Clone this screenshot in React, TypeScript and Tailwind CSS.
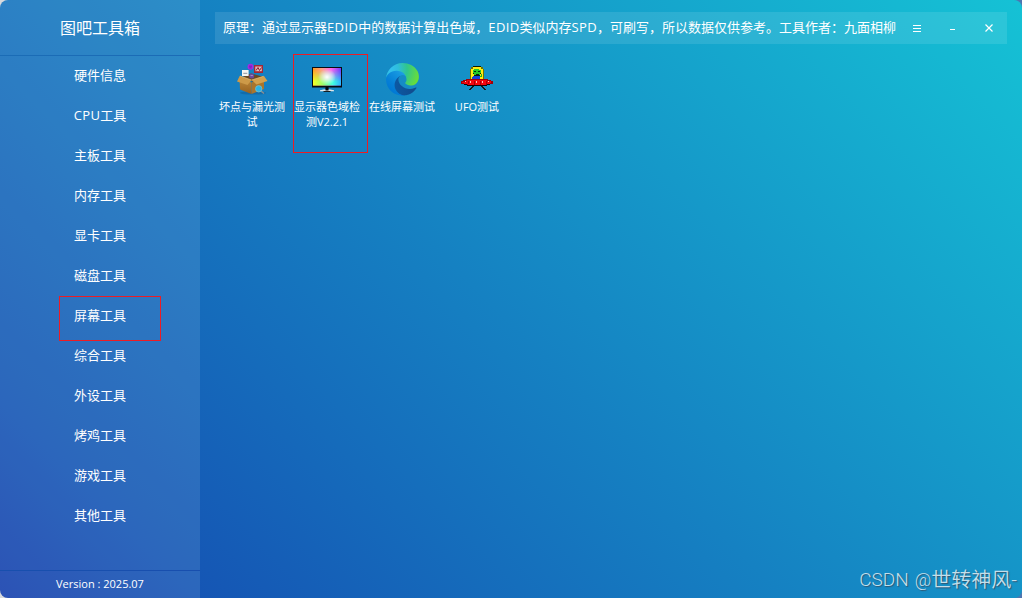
import type { ReactNode } from "react";

const categories = [
  "硬件信息", "CPU工具", "主板工具", "内存工具", "显卡工具", "磁盘工具",
  "屏幕工具", "综合工具", "外设工具", "烤鸡工具", "游戏工具", "其他工具",
];

function BoxIcon() {
  return (
    <svg width="32" height="32" viewBox="0 0 32 32">
      <defs>
        <linearGradient id="boxFront" x1="0" y1="0" x2="0" y2="1">
          <stop offset="0" stopColor="#c08a3a" />
          <stop offset="1" stopColor="#96611f" />
        </linearGradient>
      </defs>
      <ellipse cx="17" cy="30" rx="13" ry="1.6" fill="#0d4b80" opacity=".35" />
      <path d="M4 15L15 10.5L28 14L18 19Z" fill="#6b4a20" />
      <circle cx="14.5" cy="3.8" r="3" fill="#a12be0" />
      <path d="M13 3.2h3M13.4 4.8h2.2" stroke="#6a1aa8" strokeWidth=".8" />
      <rect x="18" y="2" width="9" height="8" fill="#a52735" />
      <rect x="19.3" y="3.5" width="6.5" height="4.7" fill="#dfbcbc" />
      <path d="M20 7.5l2-3 1.5 3 2-3" stroke="#8f1d2a" fill="none" />
      <rect x="6" y="7" width="6.6" height="6" fill="#f6f6f2" />
      <path d="M7.3 10.3h4" stroke="#8d959e" />
      <circle cx="15.7" cy="13" r="2.5" fill="#6a4a9a" />
      <path d="M14.5 12.6h2.4" stroke="#b9a2d4" strokeWidth=".8" />
      <path d="M3.5 15.5L15.5 19.5V31L4 26.5Z" fill="url(#boxFront)" />
      <path d="M15.5 19.5L28 15V26L15.5 31Z" fill="#a9752c" />
      <path d="M3.8 12.8L1 18.5L11.5 22L15.5 17Z" fill="#cd9a48" />
      <path d="M28 13L31.5 18L20.5 21.5L15.5 17Z" fill="#d3a14e" />
      <path d="M4 13L15.5 17L27.5 13.3" fill="none" stroke="#e8c88a" strokeWidth=".6" />
      <path d="M25 28l3 2.5" stroke="#8a8e91" strokeWidth="1.6" />
      <circle cx="22.7" cy="25.8" r="3.2" fill="#2bb4e4" stroke="#7ac4d4" strokeWidth=".7" />
    </svg>
  );
}

function MonitorIcon() {
  return (
    <svg width="32" height="32" viewBox="0 0 32 32">
      <defs>
        <linearGradient id="hue" x1="0" y1="0" x2="1" y2="0">
          <stop offset="0" stopColor="#ff9d1e" />
          <stop offset=".33" stopColor="#ff9f8a" />
          <stop offset=".65" stopColor="#ff68f0" />
          <stop offset="1" stopColor="#6e3cff" />
        </linearGradient>
        <linearGradient id="hueLow" x1="0" y1="0" x2="1" y2="0">
          <stop offset="0" stopColor="#f6ff20" />
          <stop offset=".4" stopColor="#8cff76" />
          <stop offset=".7" stopColor="#43ffe0" />
          <stop offset="1" stopColor="#2cb1ff" />
        </linearGradient>
        <linearGradient id="fade" x1="0" y1="0" x2="0" y2="1">
          <stop offset=".1" stopColor="#000" />
          <stop offset=".75" stopColor="#fff" />
        </linearGradient>
        <mask id="lowMask"><rect x="2" y="5" width="28" height="18" fill="url(#fade)" /></mask>
        <radialGradient id="glow">
          <stop offset="0" stopColor="#fff" />
          <stop offset="1" stopColor="#fff" stopOpacity="0" />
        </radialGradient>
      </defs>
      <rect x="1" y="4" width="30" height="20.5" fill="#080b10" />
      <rect x="2" y="5" width="28" height="17.5" fill="url(#hue)" />
      <rect x="2" y="5" width="28" height="17.5" fill="url(#hueLow)" mask="url(#lowMask)" />
      <ellipse cx="16" cy="14" rx="9" ry="8" fill="url(#glow)" />
      <rect x="14.5" y="24" width="3" height="3" fill="#05080c" />
      <path d="M9 27.3q7-2 14 0v1H9z" fill="#e1e7ea" />
      <path d="M12.5 28h7v.9h-7z" fill="#111" />
      <rect x="14.5" y="25.5" width="3" height="2" fill="#05080c" />
    </svg>
  );
}

function EdgeIcon() {
  return (
    <svg width="33" height="33" viewBox="0 0 256 256">
      <defs>
        <linearGradient id="edgeDeep" x1="63" y1="177" x2="241" y2="177" gradientUnits="userSpaceOnUse">
          <stop offset="0" stopColor="#0c59a4" />
          <stop offset="1" stopColor="#114a8b" />
        </linearGradient>
        <linearGradient id="edgeMid" x1="155" y1="105" x2="46" y2="224" gradientUnits="userSpaceOnUse">
          <stop offset="0" stopColor="#1b9de2" />
          <stop offset=".16" stopColor="#1595df" />
          <stop offset=".67" stopColor="#0680d7" />
          <stop offset="1" stopColor="#0078d4" />
        </linearGradient>
        <radialGradient id="edgeTop" cx="26" cy="47" r="230" gradientUnits="userSpaceOnUse">
          <stop offset="0" stopColor="#35c1f1" />
          <stop offset=".3" stopColor="#2ebddc" />
          <stop offset=".6" stopColor="#30c68c" />
          <stop offset="1" stopColor="#68dd3a" />
        </radialGradient>
      </defs>
      <path fill="url(#edgeDeep)" d="M231 190a94 94 0 0 1-10 4 102 102 0 0 1-36 7c-47 0-89-33-89-75 0-11 7-22 17-28-43 2-54 47-54 73 0 74 68 81 83 81 8 0 20-2 27-5l2 0a128 128 0 0 0 66-53 4 4 0 0 0-6-4z" />
      <path fill="url(#edgeMid)" d="M106 241a79 79 0 0 1-23-21 81 81 0 0 1 30-122c3-1 8-4 15-4a32 32 0 0 1 32 31c0 1 25-79-78-79C38 46 0 88 0 124a130 130 0 0 0 12 56 128 128 0 0 0 156 67 76 76 0 0 1-62-6z" />
      <path fill="url(#edgeTop)" d="M152 149c-1 1-3 2-3 6 0 3 2 6 6 8 15 12 42 11 42 11a71 71 0 0 0 31-10 73 73 0 0 0 27-60c0-16-5-30-11-42C222 22 176 0 128 0A128 128 0 0 0 0 126c1-36 37-66 80-66 4 0 24 0 42 10 16 8 24 19 30 29 6 11 7 24 7 30 0 5-2 12-7 20z" />
    </svg>
  );
}

function UfoIcon() {
  return (
    <svg width="32" height="32" viewBox="0 0 32 32" shapeRendering="crispEdges">
      <path d="M12 3h8v1h2v2h1v11H9V6h1V4h2z" fill="#6f7400" />
      <path d="M12 3h8v1h-8z" fill="#111800" />
      <path d="M12 4h8v2h2v10H10V6h2z" fill="#ffed12" />
      <path d="M12 7h8v4h-1v2h-6v-2h-1z" fill="#062308" />
      <path d="M13 6h5v1h2v3h-1v2h-6v-2h-1V7h1z" fill="#25c928" />
      <path d="M13 8h2v1h-2zM17 8h2v1h-2zM15 11h3v1h-3z" fill="#05280a" />
      <path d="M12 13h7v4h-8v-3h1z" fill="#1642db" />
      <path d="M20 11h1v3h-2v-1h1z" fill="#20b228" />
      <path d="M5 16h22v1h3v1h2v3h-3v1h-3v1H6v-1H3v-1H0v-3h2v-1h3z" fill="#a00008" />
      <path d="M3 21h3v1h20v-1h3v1h-3v1H6v-1H3z" fill="#1c0204" />
      <path d="M6 17h20v1h4v2h-1v1h-4v1H7v-1H3v-1H1v-1h3v-1h2z" fill="#f5060f" />
      <path d="M4 18h1v1H4zM9 18h1v2H9zM15 18h1v2h-1zM21 18h1v2h-1zM27 18h1v1h-1z" fill="#ffc4bc" />
      <path d="M7 18h1v3H7zM13 18h1v4h-1zM19 18h1v4h-1zM25 18h1v3h-1z" fill="#a80008" />
      <path d="M11 23h2v1h-1v1h-1v1h-1v1H8v-1h1v-1h1v-1h1zM20 23h2v1h1v1h1v1h1v1h-2v-1h-1v-1h-1v-1h-1z" fill="#15191c" />
    </svg>
  );
}

const tools: { lines: string[]; icon: ReactNode; marked?: boolean }[] = [
  { lines: ["坏点与漏光测", "试"], icon: <BoxIcon /> },
  { lines: ["显示器色域检", "测V2.2.1"], icon: <MonitorIcon />, marked: true },
  { lines: ["在线屏幕测试"], icon: <EdgeIcon /> },
  { lines: ["UFO测试"], icon: <UfoIcon /> },
];

function Latin({ children }: { children: string }) {
  return <span className="tracking-[0.38px]">{children}</span>;
}

export default function App() {
  return (
    <div className="h-[598px] w-[1022px] bg-[linear-gradient(90deg,#d8dadd_50%,#4e76b0_50%)]">
      <div className="relative flex h-full w-full overflow-hidden rounded-[8px] bg-[linear-gradient(45deg,#143fad_0%,#1555b4_12%,#1581c2_48.5%,#15c2d5_100%)] font-['Open_Sans','Noto_Sans_CJK_SC',sans-serif] text-white">
        <aside className="flex w-[200px] shrink-0 flex-col bg-white/10">
          <h1 className="flex h-[56px] items-center justify-center border-b border-[#1b6cb6] pt-px text-[16px] font-normal">图吧工具箱</h1>
          <nav className="flex flex-1 flex-col">
            {categories.map((name) => (
              <div key={name} className="relative flex h-[40px] items-center justify-center text-[13px]">
                {name.startsWith("CPU") ? <span><Latin>CPU</Latin>工具</span> : name}
                {name === "屏幕工具" && (
                  <span className="absolute top-0 left-[59px] h-[45px] w-[102px] border border-[#ed1c24]" />
                )}
              </div>
            ))}
          </nav>
          <footer className="flex h-[28px] items-center justify-center border-t border-[#184fae] text-[11px]">Version : 2025.07</footer>
        </aside>
        <main className="flex flex-1 flex-col px-[15px] pt-[12px]">
          <header className="flex h-[32px] items-center bg-white/10 pl-[8px]">
            <p className="w-[676px] text-[13px] whitespace-nowrap">
              原理：通过显示器<Latin>EDID</Latin>中的数据计算出色域，<Latin>EDID</Latin>类似内存<Latin>SPD</Latin>，可刷写，所以数据仅供参考。工具作者：九面相柳
            </p>
            <div className="flex flex-1 items-center">
              <svg className="ml-[14px]" width="8" height="9" viewBox="0 0 8 9" shapeRendering="crispEdges">
                <path d="M0 1.5h8M0 4.5h8M0 7.5h8" stroke="white" />
              </svg>
              <svg className="ml-[29px]" width="5" height="9" viewBox="0 0 5 9" shapeRendering="crispEdges">
                <path d="M0 5.5h5" stroke="white" />
              </svg>
              <svg className="ml-[30px]" width="8" height="8" viewBox="0 0 8 8">
                <path d="M.5.5l7 7M7.5.5l-7 7" stroke="white" strokeWidth="1.2" />
              </svg>
            </div>
          </header>
          <section className="flex pt-[10px]">
            {tools.map((tool) => (
              <div key={tool.lines[0]} className="relative h-[99px] w-[75px] pt-[9px]">
                <div className="ml-[21px] h-[36px]">{tool.icon}</div>
                <div className="pr-px text-center text-[11px] leading-[15px] whitespace-nowrap">
                  {tool.lines.map((line) => <div key={line}>{line}</div>)}
                </div>
                {tool.marked && (
                  <span className="absolute top-0 left-[3px] h-[99px] w-[75px] border border-[#ed1c24]" />
                )}
              </div>
            ))}
          </section>
        </main>
        <div className="absolute right-[5px] bottom-[4px] flex items-center font-['Roboto','Noto_Sans_CJK_SC',sans-serif] text-[20px] leading-[28px] font-[350] whitespace-nowrap text-[#c3dfeb] [text-shadow:1px_1px_1px_#31566f]">
          <span className="mr-[6px] text-[19px]">CSDN</span>
          <span className="text-[18px]">@</span>
          <span>世转神风</span>
          <span>-</span>
        </div>
      </div>
    </div>
  );
}
